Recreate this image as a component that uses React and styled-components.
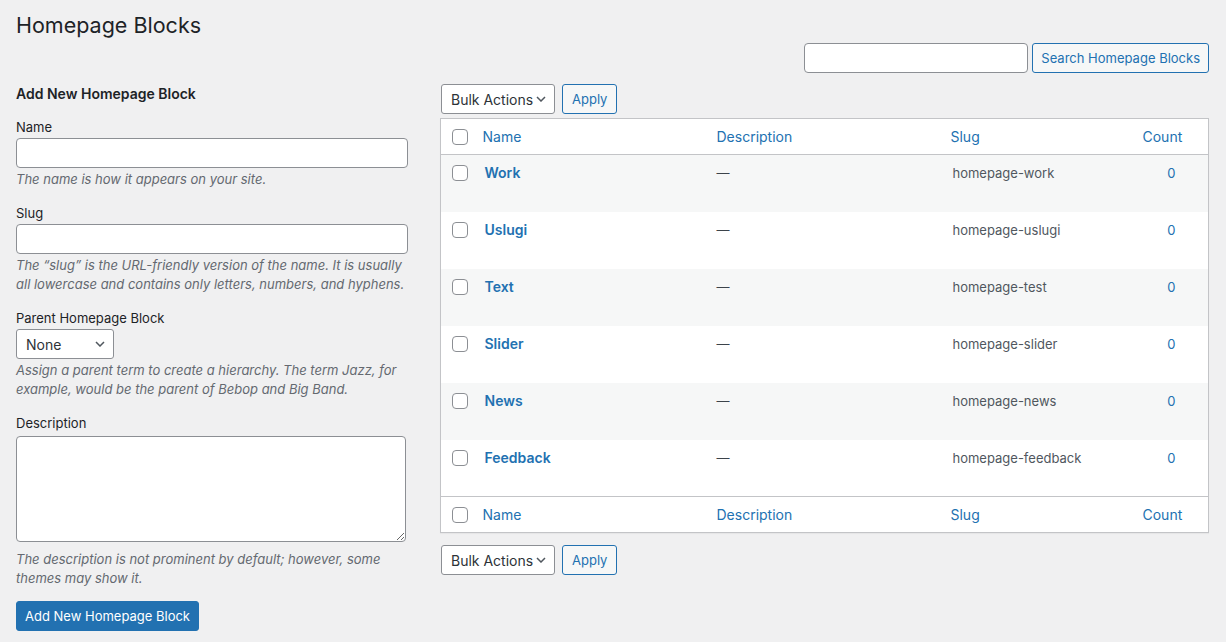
import React from 'react'
import styled, { createGlobalStyle } from 'styled-components'

const GlobalStyle = createGlobalStyle`
  html, body {
    margin: 0;
    padding: 0;
    background: #f0f0f1;
    color: #1d2327;
    font-family: Inter, "Noto Sans", "Liberation Sans", sans-serif;
    font-size: 13px;
  }
  * { box-sizing: border-box; }
`

const terms = [
  { name: 'Work', slug: 'homepage-work' },
  { name: 'Uslugi', slug: 'homepage-uslugi' },
  { name: 'Text', slug: 'homepage-test' },
  { name: 'Slider', slug: 'homepage-slider' },
  { name: 'News', slug: 'homepage-news' },
  { name: 'Feedback', slug: 'homepage-feedback' },
]

function Chevron() {
  return (
    <svg width="10" height="6" viewBox="0 0 10 6" fill="none">
      <path d="M1 1l4 4 4-4" stroke="#50575e" strokeWidth="1.5" />
    </svg>
  )
}

function App() {
  return (
    <Wrap>
      <GlobalStyle />
      <Title>Homepage Blocks</Title>
      <SearchBar>
        <TextInput $width="224px" />
        <Button $pad="8px">Search Homepage Blocks</Button>
      </SearchBar>

      <Columns>
        <div>
          <FormTitle>Add New Homepage Block</FormTitle>
          <Field>
            <Label>Name</Label>
            <TextInput />
            <Help>The name is how it appears on your site.</Help>
          </Field>
          <Field>
            <Label>Slug</Label>
            <TextInput />
            <Help>The “slug” is the URL-friendly version of the name. It is usually all lowercase and contains only letters, numbers, and hyphens.</Help>
          </Field>
          <Field>
            <Label>Parent Homepage Block</Label>
            <Select $width="98px">None<Chevron /></Select>
            <Help>Assign a parent term to create a hierarchy. The term Jazz, for example, would be the parent of Bebop and Big Band.</Help>
          </Field>
          <Field>
            <Label $gap="3px">Description</Label>
            <TextArea />
            <Help $top="8px">The description is not prominent by default; however, some themes may show it.</Help>
          </Field>
          <PrimaryButton $pad="8px">Add New Homepage Block</PrimaryButton>
        </div>

        <div>
          <TableNav>
            <Select $width="114px">Bulk Actions<Chevron /></Select>
            <Button $pad="9px">Apply</Button>
          </TableNav>
          <Table>
            <colgroup>
              <col style={{ width: 34 }} />
              <col style={{ width: 234 }} />
              <col style={{ width: 234 }} />
              <col style={{ width: 192 }} />
              <col />
            </colgroup>
            <thead>
              <HeadRow>
                <CheckCell as="th"><Checkbox /></CheckCell>
                <Th>Name</Th>
                <Th>Description</Th>
                <Th>Slug</Th>
                <Th>Count</Th>
              </HeadRow>
            </thead>
            <tbody>
              {terms.map((t, i) => (
                <Row key={t.slug} $striped={i % 2 === 0}>
                  <CheckCell><Checkbox /></CheckCell>
                  <Td><TermLink>{t.name}</TermLink></Td>
                  <Td $pad="8px">—</Td>
                  <Td $muted>{t.slug}</Td>
                  <Td $center><CountLink>0</CountLink></Td>
                </Row>
              ))}
            </tbody>
            <tfoot>
              <FootRow>
                <CheckCell as="th"><Checkbox /></CheckCell>
                <Th>Name</Th>
                <Th>Description</Th>
                <Th>Slug</Th>
                <Th>Count</Th>
              </FootRow>
            </tfoot>
          </Table>
          <TableNav $bottom>
            <Select $width="114px">Bulk Actions<Chevron /></Select>
            <Button $pad="9px">Apply</Button>
          </TableNav>
        </div>
      </Columns>
    </Wrap>
  )
}

export default App

const Wrap = styled.div`
  padding: 0 17px 20px 16px;
`

const Title = styled.h1`
  margin: 0;
  padding: 10px 0 3px;
  font-size: 21.5px;
  font-weight: 400;
  line-height: 30px;
  color: #1d2327;
`

const SearchBar = styled.div`
  display: flex;
  justify-content: flex-end;
  gap: 4px;
  height: 30px;
`

const Columns = styled.div`
  display: grid;
  grid-template-columns: 392px 1fr;
  gap: 32px;
  margin-top: 11px;
`

const FormTitle = styled.h2`
  margin: 0 0 13px;
  font-size: 14px;
  font-weight: 600;
  line-height: 20px;
`

const Field = styled.div`
  margin-bottom: 14px;
`

const Label = styled.label`
  display: block;
  font-size: 13px;
  line-height: 20px;
  margin-bottom: ${p => p.$gap || '1px'};
  color: #1d2327;
`

const TextInput = styled.input`
  display: block;
  width: ${p => p.$width || '100%'};
  height: 30px;
  border: 1px solid #8c8f94;
  border-radius: 4px;
  background: #fff;
  padding: 0 8px;
  font: inherit;
`

const TextArea = styled.textarea`
  display: block;
  width: calc(100% - 2px);
  height: 106px;
  border: 1px solid #8c8f94;
  border-radius: 4px;
  background: #fff;
  font: inherit;
`

const Help = styled.p`
  margin: ${p => p.$top || '2px'} 0 0;
  font-size: 13px;
  line-height: 19px;
  font-style: italic;
  color: #646970;
`

const Select = styled.div`
  display: flex;
  align-items: center;
  justify-content: space-between;
  width: ${p => p.$width};
  height: 30px;
  padding: 0 8px 0 9px;
  border: 1px solid #8c8f94;
  border-radius: 3px;
  background: #fff;
  font-size: 14px;
  color: #2c3338;
`

const Button = styled.button`
  height: 30px;
  padding: 0 ${p => p.$pad || '10px'};
  border: 1px solid #2271b1;
  border-radius: 3px;
  background: #f6f7f7;
  color: #2271b1;
  font: inherit;
  font-size: 13px;
`

const PrimaryButton = styled(Button)`
  margin-top: -1px;
  background: #2271b1;
  color: #fff;
`

const TableNav = styled.div`
  display: flex;
  gap: 7px;
  height: 30px;
  margin: ${p => (p.$bottom ? '12px 0 0 1px' : '0 0 4px 1px')};
`

const Table = styled.table`
  width: 100%;
  table-layout: fixed;
  border-collapse: collapse;
  background: #fff;
  border: 1px solid #c3c4c7;
  box-shadow: 0 1px 1px rgba(0, 0, 0, 0.04);
`

const HeadRow = styled.tr`
  height: 36px;
  border-bottom: 1px solid #c3c4c7;
`

const FootRow = styled.tr`
  height: 36px;
  border-top: 1px solid #c3c4c7;
`

const Row = styled.tr`
  background: ${p => (p.$striped ? '#f6f7f7' : '#fff')};
  height: 57px;
`

const Th = styled.th`
  padding: 0 8px;
  text-align: left;
  font-weight: 400;
  font-size: 14px;
  color: #2271b1;
  vertical-align: middle;
`

const Td = styled.td`
  padding: 8px ${p => p.$pad || '10px'} 0;
  vertical-align: top;
  font-size: 13px;
  line-height: 20px;
  color: ${p => (p.$muted ? '#50575e' : '#3c434a')};
  text-align: ${p => (p.$center ? 'center' : 'left')};
`

const CheckCell = styled.td`
  padding: ${p => (p.as === 'th' ? '0' : '10px')} 0 0 11px;
  vertical-align: ${p => (p.as === 'th' ? 'middle' : 'top')};
  text-align: left;
`

const Checkbox = styled.span`
  display: block;
  width: 16px;
  height: 16px;
  border: 1px solid #8c8f94;
  border-radius: 4px;
  background: #fff;
`

const TermLink = styled.a`
  font-size: 14px;
  font-weight: 600;
  color: #2271b1;
`

const CountLink = styled.a`
  color: #2271b1;
`
